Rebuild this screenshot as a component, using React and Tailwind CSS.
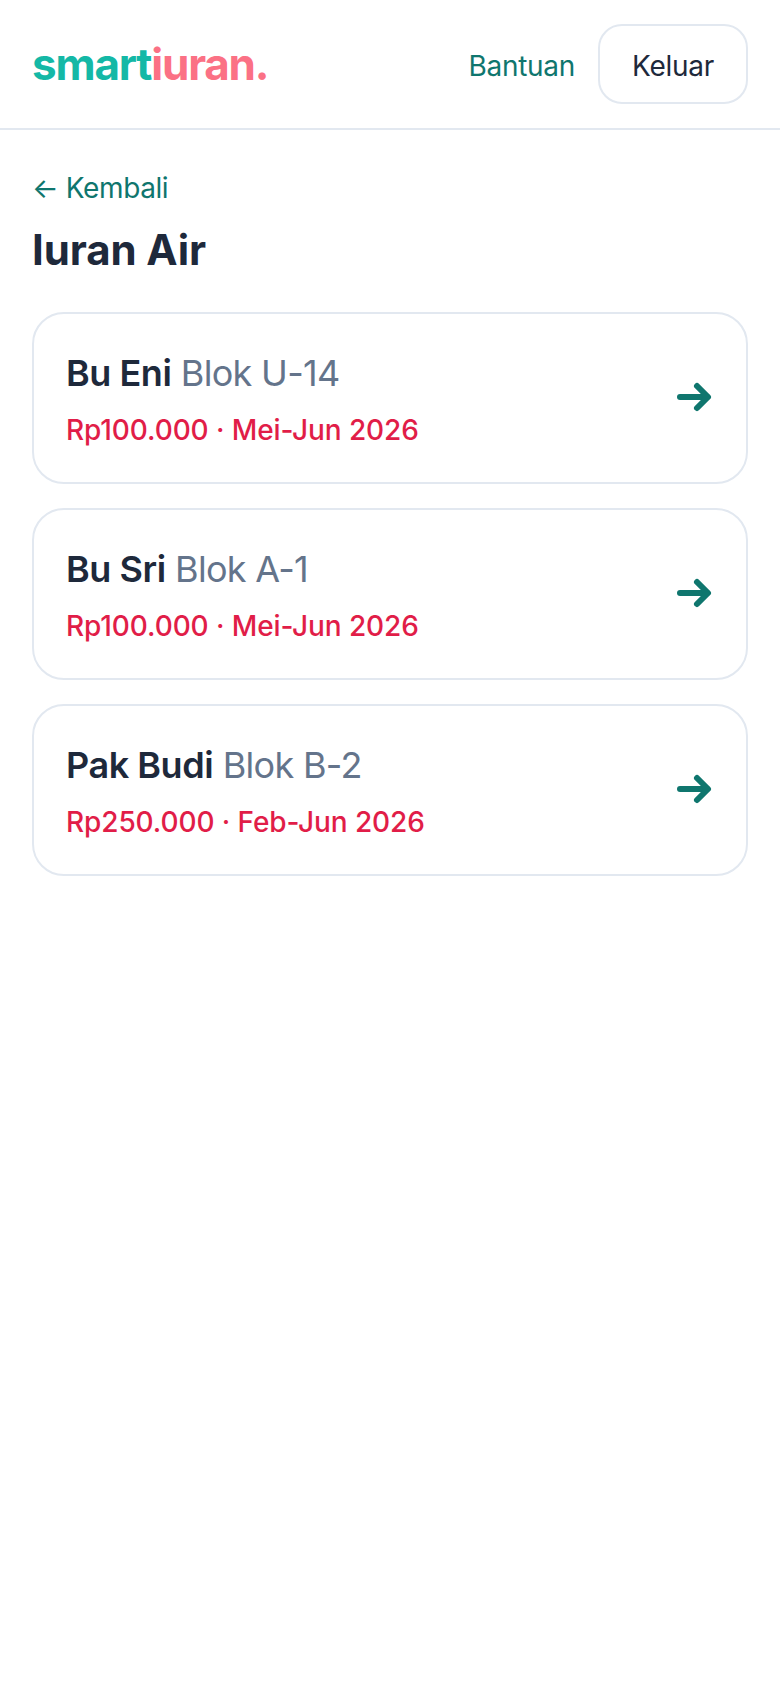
const F = "font-['Inter',sans-serif]";
const items = [
  ["Bu Eni", "Blok U-14", "Rp100.000 · Mei-Jun 2026"],
  ["Bu Sri", "Blok A-1", "Rp100.000 · Mei-Jun 2026"],
  ["Pak Budi", "Blok B-2", "Rp250.000 · Feb-Jun 2026"],
];
function Arrow() {
  return (
    <svg width="40" height="40" viewBox="0 0 40 40" fill="none" stroke="#0f766e" strokeWidth="6" strokeLinecap="round" strokeLinejoin="round" className="shrink-0 -translate-y-px">
      <path d="M6 20H33" /><path d="M23 9 34 20 23 31" />
    </svg>
  );
}
export default function App() {
  return (
    <div className={`${F} min-h-[1688px] bg-white`}>
      <header className="flex h-[130px] items-center justify-between border-b-2 border-[#e2e8f0] px-8">
        <div className="text-[44px] font-bold tracking-[-1.2px] text-[#14b8a6]">smart<span className="text-[#fb7185]">iuran.</span></div>
        <div className="flex items-center gap-[23px]">
          <span className="pt-[3px] text-[28px] tracking-[-0.3px] text-[#0f766e]">Bantuan</span>
          <button className="h-20 w-[150px] rounded-[24px] border-2 border-[#e2e8f0] pt-[3px] text-[28px] tracking-[-0.3px] text-[#1e293b]">Keluar</button>
        </div>
      </header>
      <main className="px-8 pt-[38px]">
        <div className="text-[28px] leading-[40px] tracking-[-0.4px] text-[#0f766e]">← Kembali</div>
        <h1 className="mt-[14px] text-[42px] font-bold leading-[56px] tracking-[-0.1px] text-[#1e293b]">Iuran Air</h1>
        <div className="mt-[34px] flex flex-col gap-6">
          {items.map(([n, b, d]) => (
            <div key={n} className="flex h-[172px] items-center justify-between rounded-[32px] border-2 border-[#e2e8f0] px-8">
              <div className="pt-[3px]">
                <div className="text-[36px] leading-[48px] tracking-[-0.7px] text-[#64748b]"><b className="font-semibold tracking-[-0.45px] text-[#1e293b]">{n}</b> {b}</div>
                <div className="mt-[13px] text-[28px] font-medium leading-[40px] tracking-[-0.1px] text-[#e11d48]">{d}</div>
              </div>
              <Arrow />
            </div>
          ))}
        </div>
      </main>
    </div>
  );
}
